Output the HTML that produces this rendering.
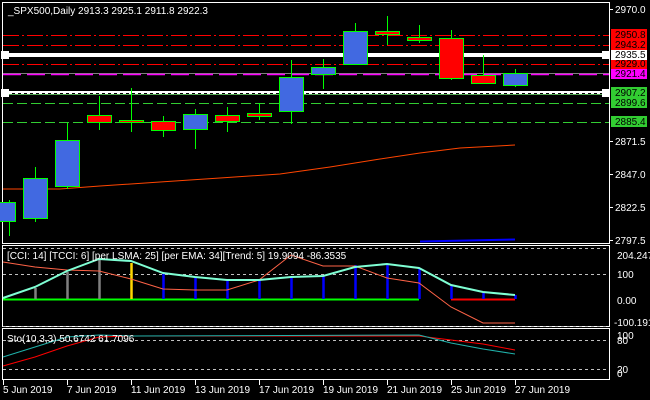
<!DOCTYPE html>
<html><head><meta charset="utf-8"><style>
html,body{margin:0;padding:0;background:#000;width:650px;height:400px;overflow:hidden}
svg{display:block}
text{font-family:"Liberation Sans",sans-serif;font-size:10px;fill:#fff}
</style></head><body>
<svg width="650" height="400" viewBox="0 0 650 400" xmlns="http://www.w3.org/2000/svg">
<rect width="650" height="400" fill="#000"/>
<!-- borders -->
<g stroke="#fff" stroke-width="1" fill="none">
<rect x="2.5" y="2.5" width="607" height="241"/>
<rect x="2.5" y="245.5" width="607" height="81"/>
<rect x="2.5" y="328.5" width="607" height="51"/>
</g>
<!-- horizontal level lines -->
<g fill="none" stroke-width="1">
<line x1="3" y1="35.5" x2="609" y2="35.5" stroke="#f00" stroke-dasharray="16,3,2,3"/>
<line x1="3" y1="45.5" x2="609" y2="45.5" stroke="#f00" stroke-dasharray="16,3,2,3"/>
<line x1="3" y1="64.5" x2="609" y2="64.5" stroke="#f00" stroke-dasharray="16,3,2,3"/>
<line x1="3" y1="73.5" x2="609" y2="73.5" stroke="#808080"/>
<line x1="3" y1="74.5" x2="609" y2="74.5" stroke="#f0f" stroke-width="1.5" stroke-dasharray="18,6"/>
<line x1="3" y1="103.5" x2="609" y2="103.5" stroke="#32cd32" stroke-dasharray="10,4"/>
<line x1="3" y1="122.5" x2="609" y2="122.5" stroke="#32cd32" stroke-dasharray="10,4"/>
<line x1="3" y1="94.5" x2="609" y2="94.5" stroke="#5a5" />
</g>
<rect x="3" y="53" width="606" height="4" fill="#fff"/>
<rect x="1" y="51" width="8" height="8" fill="#fff"/>
<rect x="3" y="91" width="606" height="2" fill="#fff"/>
<line x1="3" y1="93.5" x2="609" y2="93.5" stroke="#fff" stroke-dasharray="3,3"/>
<rect x="1" y="89" width="8" height="8" fill="#fff"/>
<rect x="602" y="51" width="8" height="8" fill="#fff"/>
<rect x="602" y="89" width="8" height="8" fill="#fff"/>
<!-- MA -->
<polyline fill="none" stroke="#ff4500" stroke-width="1" points="3,189 60,189 100,186 160,182 220,178 280,174 330,167 380,159 420,153 460,148 515,145"/>
<line x1="420" y1="241.5" x2="515" y2="239.5" stroke="#00f" stroke-width="2"/>
<!-- candles -->
<g stroke="#0f0" stroke-width="1">
<line x1="9.5" y1="200" x2="9.5" y2="236"/>
<line x1="35.5" y1="167" x2="35.5" y2="222"/>
<line x1="67.5" y1="123" x2="67.5" y2="189"/>
<line x1="99.5" y1="96" x2="99.5" y2="130"/>
<line x1="131.5" y1="88" x2="131.5" y2="132"/>
<line x1="163.5" y1="116" x2="163.5" y2="137"/>
<line x1="195.5" y1="109" x2="195.5" y2="149"/>
<line x1="227.5" y1="107" x2="227.5" y2="132"/>
<line x1="259.5" y1="103" x2="259.5" y2="120"/>
<line x1="291.5" y1="60" x2="291.5" y2="124"/>
<line x1="323.5" y1="59" x2="323.5" y2="89"/>
<line x1="355.5" y1="23" x2="355.5" y2="64"/>
<line x1="387.5" y1="16" x2="387.5" y2="45"/>
<line x1="419.5" y1="25" x2="419.5" y2="43"/>
<line x1="451.5" y1="30" x2="451.5" y2="80"/>
<line x1="483.5" y1="55" x2="483.5" y2="84"/>
<line x1="515.5" y1="69" x2="515.5" y2="87"/>
</g>
<g stroke="#0f0" stroke-width="1">
<rect x="-8.5" y="202.5" width="24" height="19" fill="#4169e1"/>
<rect x="23.5" y="178.5" width="24" height="40" fill="#4169e1"/>
<rect x="55.5" y="140.5" width="24" height="46" fill="#4169e1"/>
<rect x="87.5" y="115.5" width="24" height="7" fill="#f00"/>
<rect x="119.5" y="120.5" width="24" height="2" fill="#f00"/>
<rect x="151.5" y="121.5" width="24" height="9" fill="#f00"/>
<rect x="183.5" y="114.5" width="24" height="15" fill="#4169e1"/>
<rect x="215.5" y="115.5" width="24" height="6" fill="#f00"/>
<rect x="247.5" y="113.5" width="24" height="3" fill="#f00"/>
<rect x="279.5" y="77.5" width="24" height="34" fill="#4169e1"/>
<rect x="311.5" y="67.5" width="24" height="7" fill="#4169e1"/>
<rect x="343.5" y="31.5" width="24" height="33" fill="#4169e1"/>
<rect x="375.5" y="31.5" width="24" height="3" fill="#f00"/>
<rect x="407.5" y="37.5" width="24" height="3" fill="#f00"/>
<rect x="439.5" y="38.5" width="24" height="40" fill="#f00"/>
<rect x="471.5" y="75.5" width="24" height="8" fill="#f00"/>
<rect x="503.5" y="73.5" width="24" height="12" fill="#4169e1"/>
</g>
<text x="8" y="14">_SPX500,Daily  2913.3 2925.1 2911.8 2922.3</text>
<!-- right price labels -->
<g>
<line x1="609" y1="9.5" x2="613" y2="9.5" stroke="#fff"/>
<text x="615" y="13">2970.0</text>
<rect x="611" y="29" width="36" height="11" fill="#f00"/>
<rect x="611" y="40" width="36" height="10" fill="#f00"/>
<rect x="611" y="50" width="36" height="10" fill="#fff"/>
<rect x="611" y="60" width="36" height="9" fill="#f00"/>
<rect x="611" y="69" width="36" height="10" fill="#f0f"/>
<rect x="611" y="87" width="36" height="12" fill="#32cd32"/>
<rect x="611" y="99" width="36" height="9" fill="#32cd32"/>
<rect x="611" y="116" width="36" height="11" fill="#32cd32"/>
<text x="615" y="38" style="fill:#000">2950.8</text>
<text x="615" y="48" style="fill:#000">2943.2</text>
<text x="615" y="58" style="fill:#000">2935.5</text>
<text x="615" y="67" style="fill:#000">2929.0</text>
<text x="615" y="77" style="fill:#000">2921.4</text>
<text x="615" y="96" style="fill:#000">2907.2</text>
<text x="615" y="106" style="fill:#000">2899.6</text>
<text x="615" y="125" style="fill:#000">2885.4</text>
<line x1="609" y1="141.5" x2="613" y2="141.5" stroke="#fff"/>
<text x="615" y="145">2871.5</text>
<line x1="609" y1="174.5" x2="613" y2="174.5" stroke="#fff"/>
<text x="615" y="178">2847.0</text>
<line x1="609" y1="207.5" x2="613" y2="207.5" stroke="#fff"/>
<text x="615" y="211">2822.5</text>
<line x1="609" y1="240.5" x2="613" y2="240.5" stroke="#fff"/>
<text x="615" y="244">2797.5</text>
</g>
<!-- CCI panel -->
<g stroke="#c0c0c0" stroke-dasharray="3,3">
<line x1="3" y1="248.5" x2="609" y2="248.5"/>
<line x1="3" y1="274.5" x2="609" y2="274.5"/>
<line x1="3" y1="326.5" x2="609" y2="326.5"/>
<line x1="3" y1="340.5" x2="609" y2="340.5"/>
<line x1="3" y1="369.5" x2="609" y2="369.5"/>
</g>
<line x1="3" y1="299.5" x2="419" y2="299.5" stroke="#0f0" stroke-width="2"/>
<line x1="451" y1="299.5" x2="515" y2="299.5" stroke="#f00" stroke-width="2"/>
<g stroke-width="2.5">
<line x1="35.5" y1="288" x2="35.5" y2="299" stroke="#808080"/>
<line x1="67.5" y1="272" x2="67.5" y2="299" stroke="#808080"/>
<line x1="99.5" y1="260" x2="99.5" y2="299" stroke="#808080"/>
<line x1="131.5" y1="263" x2="131.5" y2="299" stroke="#ffd700"/>
<g stroke="#00f">
<line x1="163.5" y1="274" x2="163.5" y2="299"/>
<line x1="195.5" y1="278" x2="195.5" y2="299"/>
<line x1="227.5" y1="280" x2="227.5" y2="299"/>
<line x1="259.5" y1="280" x2="259.5" y2="299"/>
<line x1="291.5" y1="277" x2="291.5" y2="299"/>
<line x1="323.5" y1="276" x2="323.5" y2="299"/>
<line x1="355.5" y1="265" x2="355.5" y2="299"/>
<line x1="387.5" y1="264" x2="387.5" y2="299"/>
<line x1="419.5" y1="268" x2="419.5" y2="299"/>
<line x1="451.5" y1="286" x2="451.5" y2="299"/>
<line x1="483.5" y1="293" x2="483.5" y2="299"/>
<line x1="515.5" y1="295" x2="515.5" y2="299"/>
</g></g>
<polyline fill="none" stroke="#ff6347" stroke-width="1" points="3,262 35,267 67,270 99,271 131,279 163,289 195,290 227,290 259,280 291,255 323,266 355,266 387,278 419,283 451,307 483,323 515,323"/>
<polyline fill="none" stroke="#7fffd4" stroke-width="2" points="3,298 35,287 67,271 99,259 131,261 163,273 195,277 227,280 259,280 291,277 323,276 355,267 387,264 419,268 451,285 483,292 515,295"/>
<text x="7" y="259">[CCI: 14] [TCCI: 6] [per LSMA: 25] [per EMA: 34][Trend: 5]  19.9094 -86.3535</text>
<text x="617" y="259">204.2473</text>
<text x="617" y="278">100</text>
<text x="617" y="304">0.00</text>
<text x="614" y="326">-100.1916</text>
<!-- Sto -->
<polyline fill="none" stroke="#f00" stroke-width="1" points="3,366 35,357 67,346 99,337 131,336 419,336 451,340 483,344 515,350"/>
<polyline fill="none" stroke="#20b2aa" stroke-width="1" points="3,357 35,347 67,337 99,335 131,336 419,335 451,343 483,349 515,354"/>
<text x="7" y="342">Sto(10,3,3) 50.6742 61.7096</text>
<text x="617" y="339">100</text>
<text x="617" y="344">80</text>
<text x="617" y="373">20</text>
<text x="617" y="377">0</text>
<!-- dates -->
<g stroke="#fff"><line x1="3.5" y1="380" x2="3.5" y2="385"/><line x1="67.5" y1="380" x2="67.5" y2="385"/><line x1="131.5" y1="380" x2="131.5" y2="385"/><line x1="195.5" y1="380" x2="195.5" y2="385"/><line x1="259.5" y1="380" x2="259.5" y2="385"/><line x1="323.5" y1="380" x2="323.5" y2="385"/><line x1="387.5" y1="380" x2="387.5" y2="385"/><line x1="451.5" y1="380" x2="451.5" y2="385"/><line x1="515.5" y1="380" x2="515.5" y2="385"/></g>
<text x="3" y="393">5 Jun 2019</text>
<text x="67" y="393">7 Jun 2019</text>
<text x="131" y="393">11 Jun 2019</text>
<text x="195" y="393">13 Jun 2019</text>
<text x="259" y="393">17 Jun 2019</text>
<text x="323" y="393">19 Jun 2019</text>
<text x="387" y="393">21 Jun 2019</text>
<text x="451" y="393">25 Jun 2019</text>
<text x="515" y="393">27 Jun 2019</text>
</svg>
</body></html>
